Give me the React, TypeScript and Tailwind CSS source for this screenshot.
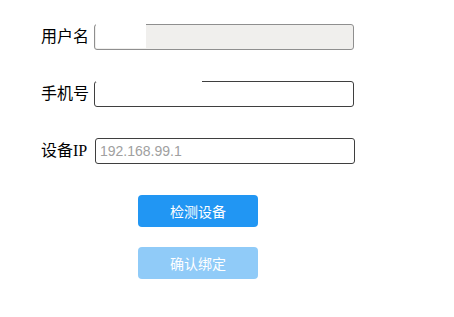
import React from "react";

const labelFont = { fontFamily: '"Liberation Serif", "Noto Sans CJK SC", serif' };

const Field: React.FC<{
  label: string;
  labelWidth: string;
  children: React.ReactNode;
}> = ({ label, labelWidth, children }) => (
  <div className="flex items-center h-[26px]">
    <span className={`${labelWidth} text-[16px] leading-none text-black`} style={labelFont}>
      {label}
    </span>
    <div className="relative">{children}</div>
  </div>
);

export default function App() {
  return (
    <div className="w-[454px] h-[317px] bg-white pt-[24px] pl-[41px] font-['Liberation_Sans','Noto_Sans_CJK_SC',sans-serif]">
      <div className="flex flex-col gap-[31px]">
        <Field label="用户名" labelWidth="w-[53px]">
          <input
            disabled
            className="block w-[260px] h-[26px] rounded-[3px] border border-[#8f8f8f] bg-[#f0efed] outline-none"
          />
          <div className="absolute left-[2px] top-0 w-[50px] h-[24px] bg-white" />
        </Field>
        <Field label="手机号" labelWidth="w-[53px]">
          <input className="block w-[260px] h-[26px] rounded-[3px] border border-[#3f3f3f] bg-white outline-none" />
          <div className="absolute left-[2px] top-0 w-[106px] h-[1px] bg-white" />
        </Field>
        <Field label="设备IP" labelWidth="w-[54px]">
          <input
            placeholder="192.168.99.1"
            className="block w-[260px] h-[26px] rounded-[3px] border border-[#3f3f3f] bg-white pl-[4px] text-[14px] outline-none placeholder:text-[#a0a0a0]"
          />
        </Field>
      </div>
      <div className="flex flex-col gap-[20px] mt-[31px] ml-[97px]">
        <button className="w-[120px] h-[32px] rounded-[4px] bg-[#2196f3] text-white text-[14px] font-['Noto_Sans_CJK_SC',sans-serif]">
          检测设备
        </button>
        <button className="w-[120px] h-[32px] rounded-[4px] bg-[#90cbf8] text-white text-[14px] font-['Noto_Sans_CJK_SC',sans-serif]">
          确认绑定
        </button>
      </div>
    </div>
  );
}
